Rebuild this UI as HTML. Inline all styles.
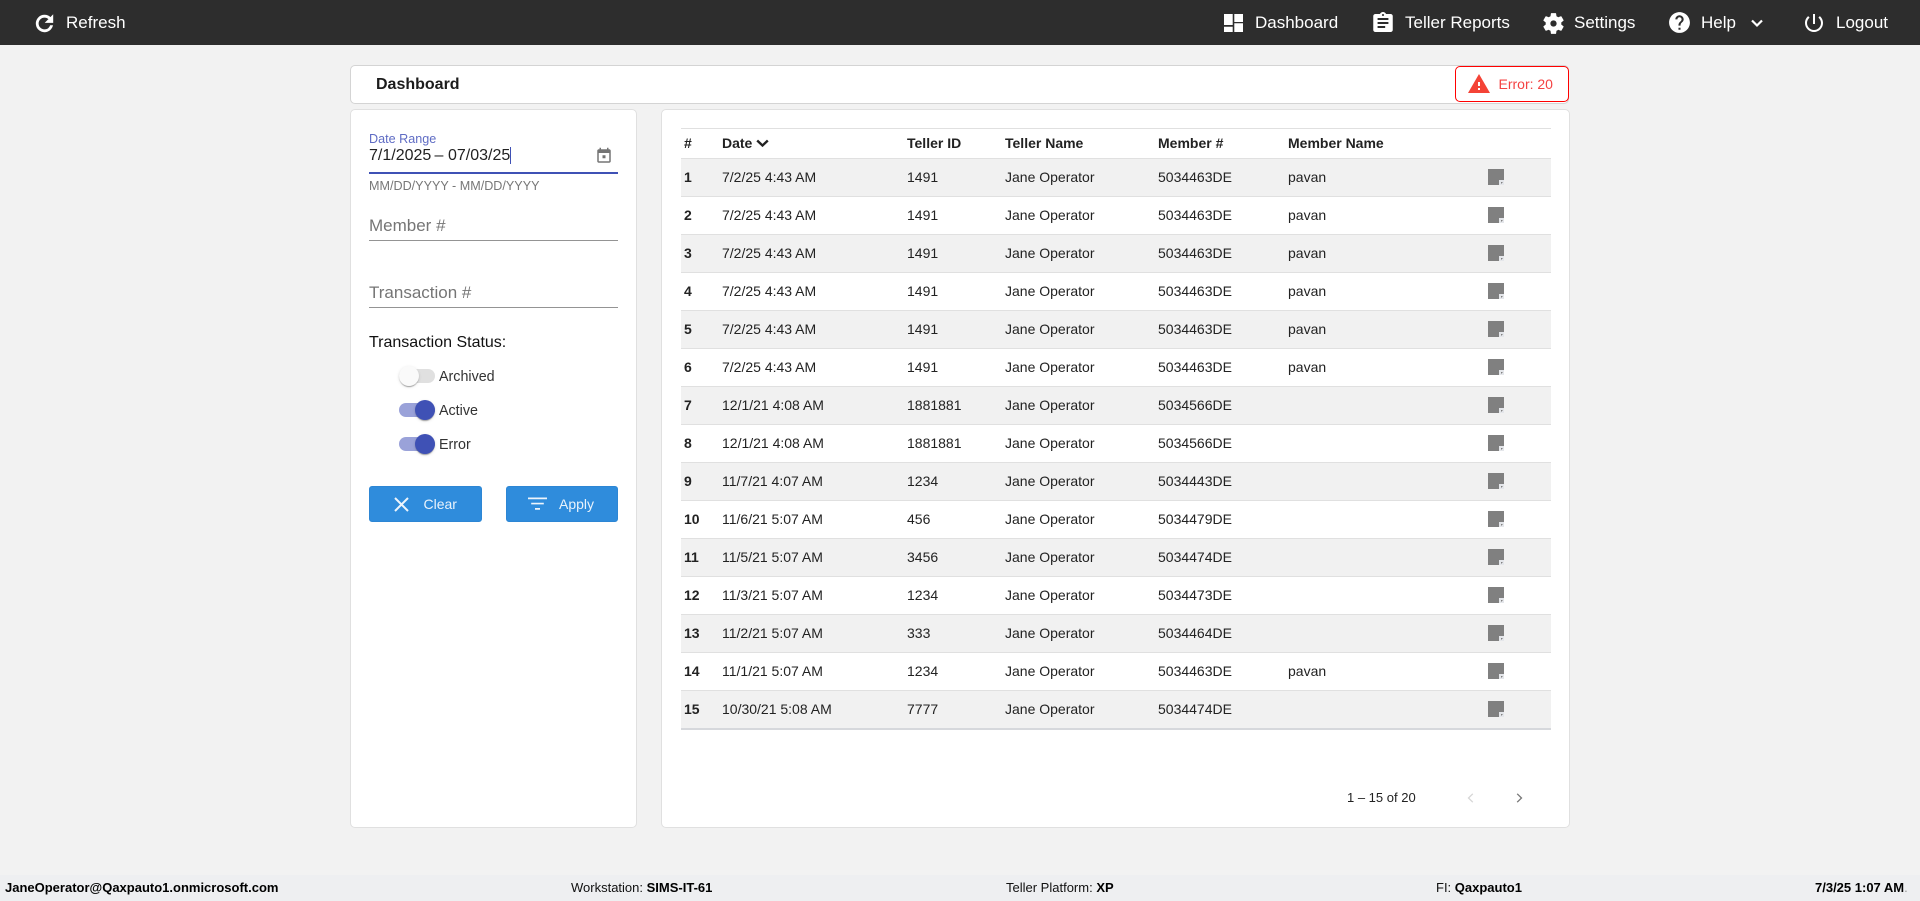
<!DOCTYPE html>
<html lang="en"><head><meta charset="utf-8"><title>Dashboard</title>
<style>
*{box-sizing:border-box}
html,body{margin:0;padding:0;width:1920px;height:901px;overflow:hidden;background:#f2f2f2;font-family:"Liberation Sans",Arial,sans-serif;color:#212121}
.a,.t{position:absolute}
.t{white-space:nowrap;line-height:20px}
svg{position:absolute;display:block}
#top{left:0;top:0;width:1920px;height:45px;background:#2d2d2d}
.n{font-size:17px;color:#fff}
.card{background:#fff;border:1px solid #e0e0e0;border-radius:5px}
.line{position:absolute;left:369px;width:249px;height:1px;background:#949494}
.ph{font-size:17px;color:#757575;left:369px}
.track{position:absolute;left:399px;width:36px;height:14px;border-radius:7px}
.thumb{position:absolute;width:20px;height:20px;border-radius:50%;box-shadow:0 2px 1px -1px rgba(0,0,0,.2),0 1px 1px 0 rgba(0,0,0,.14),0 1px 3px 0 rgba(0,0,0,.12)}
.lab{font-size:14.3px;color:#333;left:439px}
.btn{position:absolute;top:486px;height:36px;background:#2f8cdc;border:1px solid #2d86d4;border-radius:3px}
.btxt{font-size:14px;color:#e9f3fc}
table{position:absolute;left:681px;top:128px;width:870px;table-layout:fixed;border-collapse:separate;border-spacing:0;font-size:14px}
th,td{padding:0 0 2px;text-align:left;white-space:nowrap;border-bottom:1px solid #e0e0e0}
th{height:31px;border-top:1px solid #e0e0e0;font-weight:700;color:#222}
td{height:38px;color:#222}
td:first-child,th:first-child{padding-left:3px;font-weight:700}
tr.o td{background:#f1f1f1}
tr:last-child td{border-bottom:2px solid #d6d8dc;height:39px}
.ic{display:block;position:relative;width:16px;height:16px;margin:0}
#foot{left:0;top:875px;width:1920px;height:26px;background:#eeeff1}
.f{font-size:13px;color:#111}
.f b{color:#000}
</style></head><body>
<div class="a" id="top"></div>

<svg style="left:32px;top:11px" width="25" height="25" viewBox="0 0 24 24" fill="#fff" stroke="#fff" stroke-width=".7"><path d="M17.65 6.35C16.2 4.9 14.21 4 12 4c-4.42 0-7.99 3.58-7.99 8s3.57 8 7.99 8c3.73 0 6.84-2.55 7.73-6h-2.08c-.82 2.33-3.04 4-5.65 4-3.31 0-6-2.69-6-6s2.69-6 6-6c1.66 0 3.14.69 4.22 1.78L13 11h7V4l-2.35 2.35z"/></svg>
<div class="t n" style="left:66px;top:13px">Refresh</div>

<svg style="left:1224px;top:14px" width="19" height="18" viewBox="0 0 19 18" fill="#fff"><path d="M0 0h8.7v11H0zM0 12.7h8.7V18H0zM10.3 0H19v8h-8.7zM10.3 9.3H19V18h-8.7z"/></svg>
<div class="t n" style="left:1255px;top:13px">Dashboard</div>
<svg style="left:1370px;top:11px" width="26" height="24" viewBox="0 0 24 24" preserveAspectRatio="none" fill="#fff"><path d="M19 3h-4.18C14.4 1.84 13.3 1 12 1c-1.3 0-2.4.84-2.82 2H5c-1.1 0-2 .9-2 2v14c0 1.1.9 2 2 2h14c1.1 0 2-.9 2-2V5c0-1.1-.9-2-2-2zm-7 0c.55 0 1 .45 1 1s-.45 1-1 1-1-.45-1-1 .45-1 1-1zm2 14H7v-2h7v2zm3-4H7v-2h10v2zm0-4H7V7h10v2z"/></svg>
<div class="t n" style="left:1405px;top:13px">Teller Reports</div>
<svg style="left:1541px;top:11px" width="25" height="25" viewBox="0 0 24 24" fill="#fff"><path d="M19.43 12.98c.04-.32.07-.64.07-.98s-.03-.66-.07-.98l2.11-1.65c.19-.15.24-.42.12-.64l-2-3.46c-.12-.22-.39-.3-.61-.22l-2.49 1c-.52-.4-1.08-.73-1.69-.98l-.38-2.65C14.46 2.18 14.25 2 14 2h-4c-.25 0-.46.18-.49.42l-.38 2.65c-.61.25-1.17.59-1.69.98l-2.49-1c-.23-.09-.49 0-.61.22l-2 3.46c-.13.22-.07.49.12.64l2.11 1.65c-.04.32-.07.65-.07.98s.03.66.07.98l-2.11 1.65c-.19.15-.24.42-.12.64l2 3.46c.12.22.39.3.61.22l2.49-1c.52.4 1.08.73 1.69.98l.38 2.65c.03.24.24.42.49.42h4c.25 0 .46-.18.49-.42l.38-2.65c.61-.25 1.17-.59 1.69-.98l2.49 1c.23.09.49 0 .61-.22l2-3.46c.12-.22.07-.49-.12-.64l-2.11-1.65zM12 15c-1.66 0-3-1.34-3-3s1.34-3 3-3 3 1.34 3 3-1.34 3-3 3z"/></svg>
<div class="t n" style="left:1574px;top:13px">Settings</div>
<svg style="left:1667px;top:10px" width="25" height="25" viewBox="0 0 24 24" fill="#fff"><path d="M12 2C6.48 2 2 6.48 2 12s4.48 10 10 10 10-4.48 10-10S17.52 2 12 2zm1 17h-2v-2h2v2zm2.07-7.75l-.9.92C13.45 12.9 13 13.5 13 15h-2v-.5c0-1.1.45-2.1 1.17-2.83l1.24-1.26c.37-.36.59-.86.59-1.41 0-1.1-.9-2-2-2s-2 .9-2 2H8c0-2.21 1.79-4 4-4s4 1.79 4 4c0 .88-.36 1.68-.93 2.25z"/></svg>
<div class="t n" style="left:1701px;top:13px">Help</div>
<svg style="left:1750px;top:18px" width="14" height="10" viewBox="0 0 14 10" fill="none" stroke="#fff" stroke-width="2.2"><path d="M2 2.5l5 5 5-5"/></svg>
<svg style="left:1802px;top:11px" width="24" height="24" viewBox="0 0 24 24" fill="#fff"><path d="M13 3h-2v10h2V3zm4.83 2.17l-1.42 1.42C17.99 7.86 19 9.81 19 12c0 3.87-3.13 7-7 7s-7-3.13-7-7c0-2.19 1.01-4.14 2.58-5.42L6.17 5.17C4.23 6.82 3 9.26 3 12c0 4.97 4.03 9 9 9s9-4.03 9-9c0-2.74-1.23-5.18-3.17-6.83z"/></svg>
<div class="t n" style="left:1836px;top:13px">Logout</div>

<div class="a card" style="left:350px;top:65px;width:1219px;height:39px;border-color:#d4d4d4"></div>
<div class="t" style="left:376px;top:75px;font-size:16px;font-weight:700;color:#1c1c1c">Dashboard</div>
<div class="a" style="left:1455px;top:66px;width:114px;height:36px;border:1px solid #f00;border-radius:5px;background:#fff"></div>
<svg style="left:1466.5px;top:72px" width="24" height="24" viewBox="0 0 24 24" fill="#f44336"><path d="M1 21h22L12 2 1 21zm12-3h-2v-2h2v2zm0-4h-2v-4h2v4z"/></svg>
<div class="t" style="left:1498.5px;top:74px;font-size:14px;color:#f44343">Error: 20</div>

<div class="a card" style="left:350px;top:109px;width:287px;height:719px"></div>
<div class="a card" style="left:661px;top:109px;width:909px;height:719px"></div>

<div class="t" style="left:369px;top:129px;font-size:12.6px;color:#5f6cc4">Date Range</div>
<div class="t" style="left:369px;top:146px;font-size:16px;color:#222">7/1/2025</div>
<div class="t" style="left:434.5px;top:146px;font-size:16px;color:#222">–</div>
<div class="t" style="left:448px;top:146px;font-size:16px;color:#222">07/03/25</div>
<div class="a" style="left:510px;top:147px;width:1px;height:17px;background:#3f51b5"></div>
<svg style="left:595px;top:147px" width="18" height="18" viewBox="0 0 24 24" fill="#757575"><path d="M19 3h-1V1h-2v2H8V1H6v2H5c-1.11 0-2 .9-2 2v14c0 1.1.89 2 2 2h14c1.1 0 2-.9 2-2V5c0-1.1-.9-2-2-2zm0 16H5V8h14v11zM10 11h4v4h-4z"/></svg>
<div class="a" style="left:369px;top:172px;width:249px;height:2px;background:#3f51b5"></div>
<div class="t" style="left:369px;top:176px;font-size:12.6px;color:#777">MM/DD/YYYY - MM/DD/YYYY</div>

<div class="t ph" style="top:216px">Member #</div>
<div class="line" style="top:240px"></div>
<div class="t ph" style="top:283px">Transaction #</div>
<div class="line" style="top:307px"></div>

<div class="t" style="left:369px;top:333px;font-size:16px;color:#111">Transaction Status:</div>

<div class="track" style="top:369px;background:#e0e0e0"></div>
<div class="thumb" style="left:399px;top:366px;background:#fafafa"></div>
<div class="t lab" style="top:367px">Archived</div>
<div class="track" style="top:403px;background:#9aa2d9"></div>
<div class="thumb" style="left:415px;top:400px;background:#3f51b5"></div>
<div class="t lab" style="top:401px">Active</div>
<div class="track" style="top:437px;background:#9aa2d9"></div>
<div class="thumb" style="left:415px;top:434px;background:#3f51b5"></div>
<div class="t lab" style="top:435px">Error</div>

<div class="btn" style="left:369px;width:113px"></div>
<svg style="left:393px;top:496px" width="17" height="17" viewBox="0 0 17 17" fill="none" stroke="#eef5fc" stroke-width="2"><path d="M2 2l13 13M15 2L2 15"/></svg>
<div class="t btxt" style="left:423.5px;top:494px">Clear</div>
<div class="btn" style="left:506px;width:112px"></div>
<svg style="left:528px;top:496px" width="19" height="15" viewBox="0 0 19 15" fill="#eef5fc"><path d="M0 1.5h19v1.7H0zM3.2 6.7h12.6v1.7H3.2zM7 12h5v1.7H7z"/></svg>
<div class="t btxt" style="left:559px;top:494px">Apply</div>

<table>
<colgroup><col style="width:41px"><col style="width:185px"><col style="width:98px"><col style="width:153px"><col style="width:130px"><col style="width:200px"><col style="width:63px"></colgroup>
<thead><tr><th>#</th><th>Date</th><th>Teller ID</th><th>Teller Name</th><th>Member #</th><th>Member Name</th><th></th></tr></thead>
<tbody>
<tr class="o"><td>1</td><td>7/2/25 4:43 AM</td><td>1491</td><td>Jane Operator</td><td>5034463DE</td><td>pavan</td><td><svg class="ic" viewBox="0 0 16 16"><path fill="#808080" d="M0 0h16v11h-5v5H0z"/><path fill="#e4e6ea" d="M11 11h5v5h-5z"/><path fill="#808080" d="M13 13h2l-2 2z"/></svg></td></tr>
<tr><td>2</td><td>7/2/25 4:43 AM</td><td>1491</td><td>Jane Operator</td><td>5034463DE</td><td>pavan</td><td><svg class="ic" viewBox="0 0 16 16"><path fill="#808080" d="M0 0h16v11h-5v5H0z"/><path fill="#e4e6ea" d="M11 11h5v5h-5z"/><path fill="#808080" d="M13 13h2l-2 2z"/></svg></td></tr>
<tr class="o"><td>3</td><td>7/2/25 4:43 AM</td><td>1491</td><td>Jane Operator</td><td>5034463DE</td><td>pavan</td><td><svg class="ic" viewBox="0 0 16 16"><path fill="#808080" d="M0 0h16v11h-5v5H0z"/><path fill="#e4e6ea" d="M11 11h5v5h-5z"/><path fill="#808080" d="M13 13h2l-2 2z"/></svg></td></tr>
<tr><td>4</td><td>7/2/25 4:43 AM</td><td>1491</td><td>Jane Operator</td><td>5034463DE</td><td>pavan</td><td><svg class="ic" viewBox="0 0 16 16"><path fill="#808080" d="M0 0h16v11h-5v5H0z"/><path fill="#e4e6ea" d="M11 11h5v5h-5z"/><path fill="#808080" d="M13 13h2l-2 2z"/></svg></td></tr>
<tr class="o"><td>5</td><td>7/2/25 4:43 AM</td><td>1491</td><td>Jane Operator</td><td>5034463DE</td><td>pavan</td><td><svg class="ic" viewBox="0 0 16 16"><path fill="#808080" d="M0 0h16v11h-5v5H0z"/><path fill="#e4e6ea" d="M11 11h5v5h-5z"/><path fill="#808080" d="M13 13h2l-2 2z"/></svg></td></tr>
<tr><td>6</td><td>7/2/25 4:43 AM</td><td>1491</td><td>Jane Operator</td><td>5034463DE</td><td>pavan</td><td><svg class="ic" viewBox="0 0 16 16"><path fill="#808080" d="M0 0h16v11h-5v5H0z"/><path fill="#e4e6ea" d="M11 11h5v5h-5z"/><path fill="#808080" d="M13 13h2l-2 2z"/></svg></td></tr>
<tr class="o"><td>7</td><td>12/1/21 4:08 AM</td><td>1881881</td><td>Jane Operator</td><td>5034566DE</td><td></td><td><svg class="ic" viewBox="0 0 16 16"><path fill="#808080" d="M0 0h16v11h-5v5H0z"/><path fill="#e4e6ea" d="M11 11h5v5h-5z"/><path fill="#808080" d="M13 13h2l-2 2z"/></svg></td></tr>
<tr><td>8</td><td>12/1/21 4:08 AM</td><td>1881881</td><td>Jane Operator</td><td>5034566DE</td><td></td><td><svg class="ic" viewBox="0 0 16 16"><path fill="#808080" d="M0 0h16v11h-5v5H0z"/><path fill="#e4e6ea" d="M11 11h5v5h-5z"/><path fill="#808080" d="M13 13h2l-2 2z"/></svg></td></tr>
<tr class="o"><td>9</td><td>11/7/21 4:07 AM</td><td>1234</td><td>Jane Operator</td><td>5034443DE</td><td></td><td><svg class="ic" viewBox="0 0 16 16"><path fill="#808080" d="M0 0h16v11h-5v5H0z"/><path fill="#e4e6ea" d="M11 11h5v5h-5z"/><path fill="#808080" d="M13 13h2l-2 2z"/></svg></td></tr>
<tr><td>10</td><td>11/6/21 5:07 AM</td><td>456</td><td>Jane Operator</td><td>5034479DE</td><td></td><td><svg class="ic" viewBox="0 0 16 16"><path fill="#808080" d="M0 0h16v11h-5v5H0z"/><path fill="#e4e6ea" d="M11 11h5v5h-5z"/><path fill="#808080" d="M13 13h2l-2 2z"/></svg></td></tr>
<tr class="o"><td>11</td><td>11/5/21 5:07 AM</td><td>3456</td><td>Jane Operator</td><td>5034474DE</td><td></td><td><svg class="ic" viewBox="0 0 16 16"><path fill="#808080" d="M0 0h16v11h-5v5H0z"/><path fill="#e4e6ea" d="M11 11h5v5h-5z"/><path fill="#808080" d="M13 13h2l-2 2z"/></svg></td></tr>
<tr><td>12</td><td>11/3/21 5:07 AM</td><td>1234</td><td>Jane Operator</td><td>5034473DE</td><td></td><td><svg class="ic" viewBox="0 0 16 16"><path fill="#808080" d="M0 0h16v11h-5v5H0z"/><path fill="#e4e6ea" d="M11 11h5v5h-5z"/><path fill="#808080" d="M13 13h2l-2 2z"/></svg></td></tr>
<tr class="o"><td>13</td><td>11/2/21 5:07 AM</td><td>333</td><td>Jane Operator</td><td>5034464DE</td><td></td><td><svg class="ic" viewBox="0 0 16 16"><path fill="#808080" d="M0 0h16v11h-5v5H0z"/><path fill="#e4e6ea" d="M11 11h5v5h-5z"/><path fill="#808080" d="M13 13h2l-2 2z"/></svg></td></tr>
<tr><td>14</td><td>11/1/21 5:07 AM</td><td>1234</td><td>Jane Operator</td><td>5034463DE</td><td>pavan</td><td><svg class="ic" viewBox="0 0 16 16"><path fill="#808080" d="M0 0h16v11h-5v5H0z"/><path fill="#e4e6ea" d="M11 11h5v5h-5z"/><path fill="#808080" d="M13 13h2l-2 2z"/></svg></td></tr>
<tr class="o"><td>15</td><td>10/30/21 5:08 AM</td><td>7777</td><td>Jane Operator</td><td>5034474DE</td><td></td><td><svg class="ic" viewBox="0 0 16 16"><path fill="#808080" d="M0 0h16v11h-5v5H0z"/><path fill="#e4e6ea" d="M11 11h5v5h-5z"/><path fill="#808080" d="M13 13h2l-2 2z"/></svg></td></tr>
</tbody></table>
<svg style="left:756px;top:139px" width="13" height="9" viewBox="0 0 13 9" fill="none" stroke="#222" stroke-width="2.4"><path d="M1.2 1.5l5.3 5 5.3-5"/></svg>

<div class="t" style="left:1347px;top:788px;font-size:13px;color:#222">1 – 15 of 20</div>
<svg style="left:1467px;top:793px" width="7" height="10" viewBox="0 0 7 10" fill="none" stroke="#d6d6d6" stroke-width="1.3"><path d="M5.8 .8L1.5 5l4.3 4.2"/></svg>
<svg style="left:1516px;top:793px" width="7" height="10" viewBox="0 0 7 10" fill="none" stroke="#777" stroke-width="1.3"><path d="M1.2 .8L5.5 5 1.2 9.2"/></svg>

<div class="a" id="foot"></div>
<div class="t f" style="left:5px;top:878px"><b>JaneOperator@Qaxpauto1.onmicrosoft.com</b></div>
<div class="t f" style="left:571px;top:878px">Workstation: <b>SIMS-IT-61</b></div>
<div class="t f" style="left:1006px;top:878px">Teller Platform: <b>XP</b></div>
<div class="t f" style="left:1436px;top:878px">FI: <b>Qaxpauto1</b></div>
<div class="t f" style="left:1815px;top:878px"><b>7/3/25 1:07 AM</b><span style="color:#999">.</span></div>
</body></html>
